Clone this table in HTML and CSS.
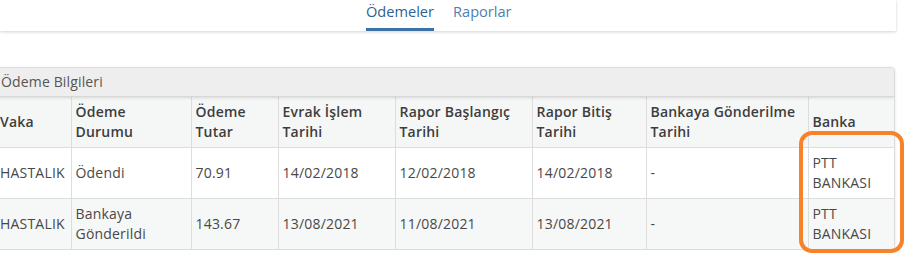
FILE: index.html
```
<!DOCTYPE html>
<html lang="tr">
<head>
<meta charset="utf-8">
<title>Ödemeler</title>
<link rel="stylesheet" href="styles.css">
</head>
<body>
<nav class="tabs">
  <a class="tab tab-active">Ödemeler</a>
  <a class="tab">Raporlar</a>
</nav>
<section class="panel">
  <div class="panel-heading">Ödeme Bilgileri</div>
  <table class="grid">
    <colgroup>
      <col class="c1"><col class="c2"><col class="c3"><col class="c4"><col class="c5"><col class="c6"><col class="c7"><col class="c8">
    </colgroup>
    <thead>
      <tr>
        <th>Vaka</th>
        <th>Ödeme<br>Durumu</th>
        <th>Ödeme<br>Tutar</th>
        <th>Evrak İşlem<br>Tarihi</th>
        <th>Rapor Başlangıç<br>Tarihi</th>
        <th>Rapor Bitiş<br>Tarihi</th>
        <th>Bankaya Gönderilme<br>Tarihi</th>
        <th>Banka</th>
      </tr>
    </thead>
    <tbody>
      <tr>
        <td>HASTALIK</td>
        <td>Ödendi</td>
        <td>70.91</td>
        <td>14/02/2018</td>
        <td>12/02/2018</td>
        <td>14/02/2018</td>
        <td>-</td>
        <td>PTT<br>BANKASI</td>
      </tr>
      <tr class="alt">
        <td>HASTALIK</td>
        <td>Bankaya<br>Gönderildi</td>
        <td>143.67</td>
        <td>13/08/2021</td>
        <td>11/08/2021</td>
        <td>13/08/2021</td>
        <td>-</td>
        <td>PTT<br>BANKASI</td>
      </tr>
    </tbody>
  </table>
</section>
<div class="highlight"></div>
</body>
</html>
```
FILE: styles.css
```
html, body {
  margin: 0;
  padding: 0;
  background: #fff;
}
body {
  font-family: "Open Sans", "Noto Sans", sans-serif;
  font-size: 14px;
  color: #555;
  overflow: hidden;
}
.tabs {
  display: flex;
  gap: 19px;
  width: 896px;
  height: 31px;
  padding-left: 366px;
  box-sizing: border-box;
  background: #fff;
  box-shadow: 0 1px 3px rgba(0, 0, 0, 0.18);
}
.tab {
  display: block;
  height: 28px;
  line-height: 22px;
  font-size: 14.6px;
  color: #4f7db1;
  border-bottom: 3px solid transparent;
}
.tab-active {
  color: #2f6194;
  border-bottom-color: #3b72a8;
}
.panel {
  margin: 36px 0 0 -5px;
  width: 900px;
  box-sizing: border-box;
  border: 1px solid #dcdcdc;
  border-radius: 4px;
  background: #fff;
  box-shadow: 0 1px 3px rgba(0, 0, 0, 0.12);
  overflow: hidden;
}
.panel-heading {
  padding: 4px 5px;
  line-height: 20px;
  background: #eeeeee;
  border-bottom: 1px solid #d8d8d8;
  box-shadow: 0 1px 3px rgba(0, 0, 0, 0.12);
  position: relative;
  color: #555;
  letter-spacing: 0.15px;
}
.grid {
  width: 100%;
  table-layout: fixed;
  border-collapse: collapse;
  border-style: hidden;
  letter-spacing: 0.2px;
}
.c1 { width: 75px; }
.c2 { width: 120px; }
.c3 { width: 87px; }
.c4 { width: 117px; }
.c5 { width: 137px; }
.c6 { width: 114px; }
.c7 { width: 162px; }
.c8 { width: 86px; }
.grid th, .grid td {
  border: 1px solid #dddddd;
  padding: 5px 5px 5px 4px;
  line-height: 20px;
  vertical-align: middle;
  text-align: left;
}
.grid th {
  font-weight: 600;
  color: #3d3d3d;
  background: #f5f6f6;
  height: 40px;
}
.grid td {
  color: #484848;
  height: 40px;
}
.grid tr.alt td {
  background: #f6f7f7;
}
.highlight {
  position: absolute;
  left: 799px;
  top: 131px;
  width: 105px;
  height: 122px;
  box-sizing: border-box;
  border: 4px solid #f7822a;
  border-radius: 13px;
}
```
